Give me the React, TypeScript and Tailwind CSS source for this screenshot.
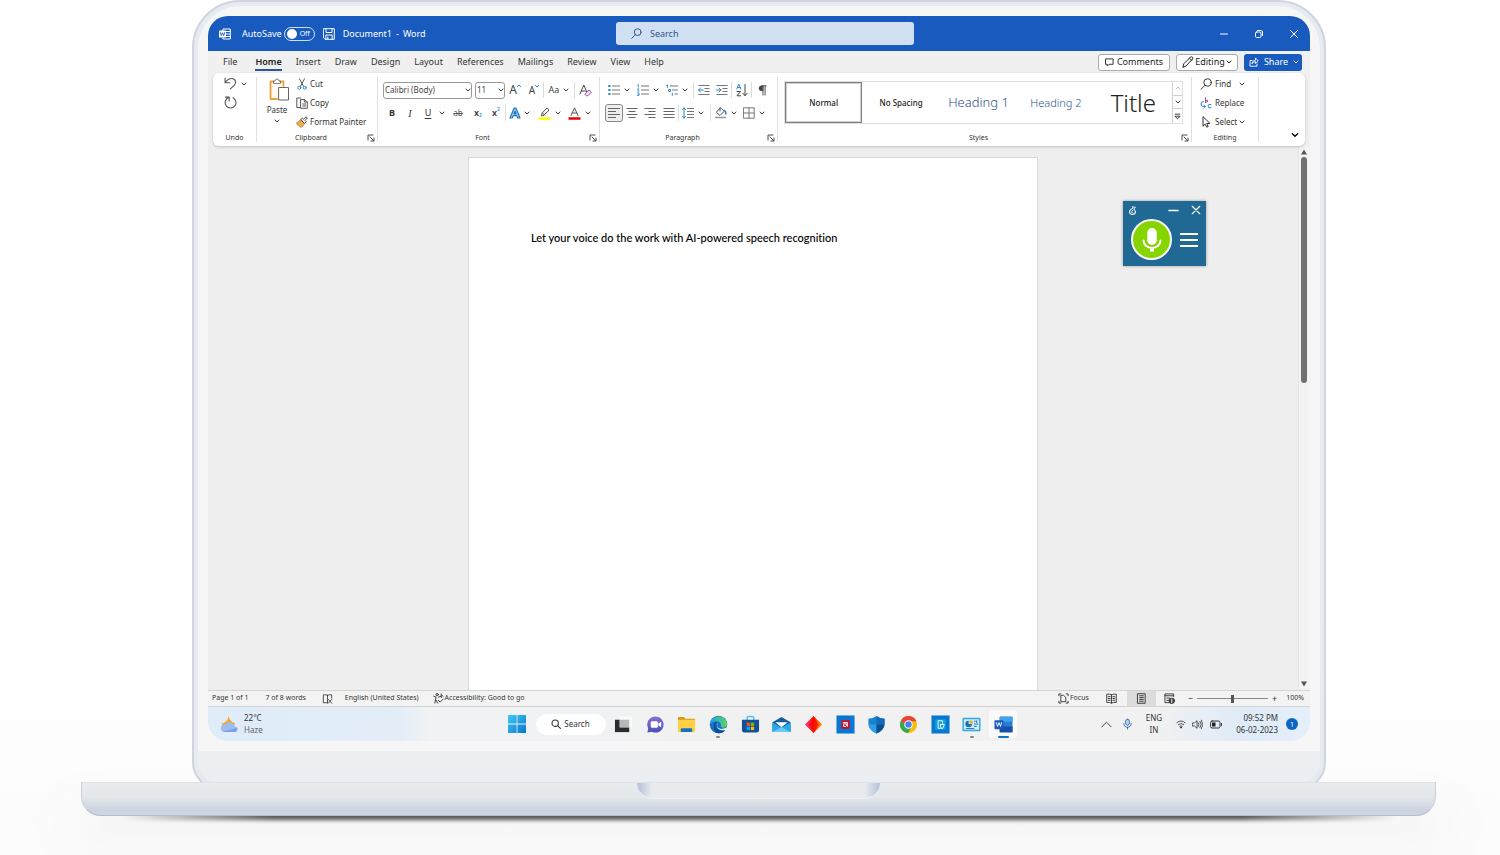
import React from "react";

type IconProps = { className?: string };
type Kids = { className?: string; children?: React.ReactNode };

const Svg = ({ className = "size-3", box = "0 0 12 12", children }: Kids & { box?: string }) => (
  <svg className={`shrink-0 ${className}`} viewBox={box} fill="none" stroke="currentColor" strokeWidth="1" strokeLinecap="round" strokeLinejoin="round" aria-hidden="true">
    {children}
  </svg>
);

const Chevron = ({ className = "size-[6px]" }: IconProps) => (
  <Svg className={className} box="0 0 6 6"><path d="M1 2l2 2 2-2" /></Svg>
);

const Btn = ({ label, className = "", children }: Kids & { label: string }) => (
  <button type="button" aria-label={label} className={`flex shrink-0 items-center justify-center ${className}`}>{children}</button>
);

const More = ({ label, className = "w-2" }: { label: string; className?: string }) => (
  <Btn label={label} className={className}><Chevron /></Btn>
);

const Sep = () => <span className="h-4 w-px shrink-0 bg-[#dcdcdc]" />;

const Launcher = ({ label }: { label: string }) => (
  <Btn label={label} className="absolute right-[2px] top-[3px]">
    <Svg className="size-2" box="0 0 8 8"><path d="M1 6V1h5M3 3l3.500 3.500M7 4v3H4" strokeWidth=".9" /></Svg>
  </Btn>
);

const Group = ({ title, className = "", launcher, children }: Kids & { title: string; launcher?: boolean }) => (
  <section aria-label={title} className={`my-1 flex flex-col border-r border-[#e0e0e0] ${className}`}>
    <div className="h-[54px] shrink-0">{children}</div>
    <div className={launcher ? "relative flex h-[14px] shrink-0 items-center justify-center pr-3 text-[7px] text-[#333]" : "relative flex h-[14px] shrink-0 items-center justify-center text-[7px] text-[#333]"}>
      <span className="leading-3">{title}</span>
      {launcher && <Launcher label={`${title} settings`} />}
    </div>
  </section>
);

/* ---------- title bar ---------- */

const WordLogo = () => (
  <Svg className="size-3">
    <path d="M4 2.500V1h7.300v10H4V9.500M6.500 3.500h4.800M6.500 6h4.800M6.500 8.500h4.800" />
    <rect x="0" y="2.500" width="7" height="7" rx=".6" fill="#fff" stroke="none" />
    <path d="M1.300 4.500l1 3 1.200-2.800 1.200 2.800 1-3" stroke="#185abd" strokeWidth=".9" />
  </Svg>
);

const TitleBar = () => (
  <header className="flex h-[35px] shrink-0 items-center bg-[#185abd] px-[11px] text-[9px] text-white">
    <div className="flex flex-1 items-center">
      <WordLogo />
      <span className="ml-[11px]">AutoSave</span>
      <button type="button" role="switch" aria-checked="false" aria-label="AutoSave" className="ml-[2px] flex h-[14px] w-[31px] items-center gap-[3px] rounded-full border border-white/80 pl-[2px] text-[7px] leading-[12px]">
        <span className="size-[10px] rounded-full bg-white" />Off
      </button>
      <Btn label="Save" className="ml-2">
        <Svg className="size-3"><path d="M.7.7h10.600v10.600H2L.7 10zM3 .7v3.800h6V.7M2.800 11.300V7h6.400v4.300M4.800 11V9" /></Svg>
      </Btn>
      <span className="ml-2 flex gap-1"><span>Document1</span><span>-</span><span>Word</span></span>
    </div>
    <label className="ml-3 flex h-[23px] w-[298px] items-center gap-2 rounded-[3px] bg-[#d1dff3] pl-[15px] text-[#244b85]">
      <Svg className="size-[11px]"><circle cx="7.300" cy="4.500" r="3.700" /><path d="M4.700 7.300L.8 11.200" /></Svg>
      <input type="search" aria-label="Search document" placeholder="Search" className="w-40 bg-transparent text-[9px] outline-none placeholder:text-[#34568a]" />
    </label>
    <div className="flex flex-1 items-center justify-end gap-[25px]">
      <Btn label="Minimize"><Svg className="size-[10px]" box="0 0 10 10"><path d="M1.500 5h7" /></Svg></Btn>
      <Btn label="Restore"><Svg className="size-[10px]" box="0 0 10 10"><rect x="1.500" y="3" width="5.500" height="5.500" rx="1.200" /><path d="M3.500 1.500H7A1.500 1.500 0 018.500 3v3.500" /></Svg></Btn>
      <Btn label="Close"><Svg className="size-[10px]" box="0 0 10 10"><path d="M1.500 1.500l7 7M8.500 1.500l-7 7" /></Svg></Btn>
    </div>
  </header>
);

/* ---------- tabs ---------- */

const tabs = ["File", "Home", "Insert", "Draw", "Design", "Layout", "References", "Mailings", "Review", "View", "Help"];

const TabBar = () => (
  <nav className="flex h-[22px] shrink-0 items-center pl-[15px] pr-2 text-[9px] text-[#333]">
    <div className="flex flex-1 gap-[14px]">
      {tabs.map((t) => (
        <a key={t} href="#" aria-current={t === "Home" ? "page" : undefined} className={t === "Home" ? "ml-1 border-y-2 border-b-[#2b579a] border-t-transparent font-semibold leading-[14px] text-[#222]" : "border-y-2 border-transparent leading-[14px]"}>{t}</a>
      ))}
    </div>
    <div className="flex items-center gap-[6px] text-[#222]">
      <button type="button" className="flex h-[17px] w-[72px] items-center justify-center gap-[3px] rounded-[3px] border border-[#aaa] bg-white">
        <Svg className="size-[9px]" box="0 0 10 10"><path d="M1 1h8v6H4.500L2.500 9V7H1z" /></Svg>Comments
      </button>
      <button type="button" className="flex h-[17px] w-[62px] items-center justify-center gap-px rounded-[3px] border border-[#aaa] bg-white">
        <Svg className="size-[12px]"><path d="M1 11l.8-3.200L8.600 1q1-.7 1.800.2t.2 1.800L4 9.900zM7.500 2.200l2.200 2.200" /></Svg>Editing<Chevron />
      </button>
      <button type="button" className="flex h-[17px] w-[58px] items-center justify-between rounded-[3px] bg-[#185abd] pl-[5px] pr-[3px] text-white">
        <Svg className="size-[10px]" box="0 0 10 10"><path d="M3 3.500H1v5.700h7V7M3 6.500q.3-3 3.500-3.300V1L9.300 4 6.500 6.500v-1.800Q4 4.600 3 6.500z" strokeWidth=".9" /></Svg>Share<Chevron />
      </button>
    </div>
  </nav>
);

/* ---------- ribbon ---------- */

const Lines = ({ d, className = "size-3" }: { d: string; className?: string }) => (
  <Svg className={className}><path d={d} stroke="#666" strokeLinecap="butt" /></Svg>
);

const UndoGroup = () => (
  <Group title="Undo" className="w-[44px]">
    <div className="flex flex-col gap-[6px] pl-[11px]">
      <div className="flex items-center gap-[3px]">
        <Btn label="Undo"><Svg className="size-[13px] text-[#555]"><path d="M1 1v4.300h4.300M1.200 5Q4 1.200 7.500 1.400q3 .4 3.200 3.200 0 1.800-1.600 3.400L5.800 11" /></Svg></Btn>
        <More label="Undo history" />
      </div>
      <Btn label="Redo" className="self-start"><Svg className="size-[13px] text-[#555]"><path d="M1.300 1h3.500v3.500M8.300 1.600A5 5 0 114.600 1.300" /></Svg></Btn>
    </div>
  </Group>
);

const ClipboardGroup = () => (
  <Group title="Clipboard" launcher className="w-[121px]">
    <div className="flex gap-[6px] pl-[7px]">
      <button type="button" className="flex w-[26px] shrink-0 flex-col items-center pt-px text-[8px] leading-[10px]">
        <Svg className="mb-[3px] ml-1 h-[24px] w-[21px]" box="0 0 21 24">
          <path d="M8 21H1.500V3.500h13V8" stroke="#e8a33d" strokeWidth="1.800" fill="#fffaf0" />
          <path d="M4.500 5V3H6q.2-2 2-2t2 2h1.500v2z" fill="#fff" stroke="#777" />
          <rect x="10" y="9.500" width="9.500" height="12.500" fill="#fff" stroke="#666" />
        </Svg>
        Paste
        <Chevron className="mt-[3px] size-[6px]" />
      </button>
      <div className="flex flex-col gap-[5px] text-[8px] leading-[14px]">
        <button type="button" className="flex items-center gap-[2px]">
          <Svg><path d="M3.500.8l4 7.500M8.500.8l-4 7.500" stroke="#555" /><circle cx="3.300" cy="9.700" r="1.500" stroke="#2b88c8" /><circle cx="8.700" cy="9.700" r="1.500" stroke="#2b88c8" /></Svg>Cut
        </button>
        <button type="button" className="flex items-center gap-[2px]">
          <Svg><path d="M4 10.500H.8V1h3.800M5 2.500h3.500L11.300 5v6.300H5zM8.300 2.700V5h2.800M6.800 7h2.800M6.800 9h2.800" stroke="#555" /></Svg>Copy
        </button>
        <button type="button" className="flex items-center gap-[2px] whitespace-nowrap">
          <Svg><path d="M.8 6.500l4.700-3 3.300 4-3.300 3.800-1.700-.8-.9-1.500-1 .2z" fill="#f0ad4e" stroke="#b9731e" strokeWidth=".7" /><path d="M5 3.300L6.300 2l1.300 1.200L10 .8l1.400 1.300L9 4.500l1.200 1.200-1.400 1.500z" fill="#fff" stroke="#444" /></Svg>Format Painter
        </button>
      </div>
    </div>
  </Group>
);

const FontGroup = () => (
  <Group title="Font" launcher className="w-[222px]">
    <div className="flex h-[26px] items-center pl-[5px]">
      <span className="relative flex items-center">
        <select aria-label="Font family" className="h-[17px] w-[89px] appearance-none rounded-[3px] border border-[#999] bg-white pl-px text-[8px] text-[#444]"><option>Calibri (Body)</option></select>
        <Chevron className="pointer-events-none absolute right-px size-[6px]" />
      </span>
      <span className="relative ml-[3px] flex items-center">
        <select aria-label="Font size" className="h-[17px] w-[30px] appearance-none rounded-[3px] border border-[#999] bg-white pl-px text-[8px] text-[#444]"><option>11</option></select>
        <Chevron className="pointer-events-none absolute right-px size-[6px]" />
      </span>
      <Btn label="Grow font" className="w-5 text-[12px] leading-none text-[#444]">A<Svg className="mb-2 size-[4px] text-[#2b88c8]" box="0 0 4 4"><path d="M0 3l2-2 2 2" /></Svg></Btn>
      <Btn label="Shrink font" className="w-[18px] text-[10px] leading-none text-[#444]">A<Svg className="mb-2 size-[4px] text-[#2b88c8]" box="0 0 4 4"><path d="M0 1l2 2 2-2" /></Svg></Btn>
      <Sep />
      <Btn label="Change case" className="w-[30px] gap-1 text-[9px] text-[#444]">Aa<Chevron /></Btn>
      <Sep />
      <Btn label="Clear formatting" className="w-5"><Svg className="size-[13px]" box="0 0 13 13"><path d="M1 10l3.800-9 3 7M2.300 7h4" stroke="#444" /><path d="M6.500 9.500L10 6l2.300 2.200-3.500 3.600H7.500L6 10.300z" stroke="#a349a4" fill="#f4e3f6" /></Svg></Btn>
    </div>
    <div className="flex h-5 items-center pl-[5px] text-[9px] text-[#333]">
      <Btn label="Bold" className="w-[18px] font-bold">B</Btn>
      <Btn label="Italic" className="w-[18px] font-['Liberation_Serif',serif] text-[10px] italic">I</Btn>
      <Btn label="Underline" className="w-[18px] underline underline-offset-2">U</Btn>
      <More label="Underline style" className="w-[10px]" />
      <Btn label="Strikethrough" className="w-[22px] text-[8px] text-[#555] line-through">ab</Btn>
      <Btn label="Subscript" className="w-[18px] font-semibold">x<span className="mt-[6px] text-[5px] text-[#2b88c8]">2</span></Btn>
      <Btn label="Superscript" className="w-[18px] font-semibold">x<span className="mb-[6px] text-[5px] text-[#2b88c8]">2</span></Btn>
      <Sep />
      <Btn label="Text effects" className="w-[18px]"><Svg className="size-3"><path d="M1 11L5 1.200h2L11 11H8.700l-.9-2.400H4.200L3.300 11zM6 4L5 6.800h2z" fill="#a6d4f5" stroke="#2474ba" strokeWidth="1.200" /></Svg></Btn>
      <More label="Text effect options" className="w-[6px]" />
      <Btn label="Highlight colour" className="ml-1 w-[20px]"><Svg className="size-[13px]" box="0 0 13 13"><path d="M.5 11.500h12" stroke="#ff0" strokeWidth="2.600" strokeLinecap="butt" /><path d="M3.500 8.500l.7-2.500L9 1l2 2-4.700 5zM4.500 6l2 2" stroke="#555" /></Svg></Btn>
      <More label="Highlight options" />
      <Btn label="Font colour" className="ml-[2px] w-[20px]"><Svg className="size-[13px]" box="0 0 13 13"><path d="M.5 11.500h12" stroke="#e00" strokeWidth="2.600" strokeLinecap="butt" /><path d="M3 8.500L6.500.8 10 8.500M4.200 6h4.600" stroke="#555" /></Svg></Btn>
      <More label="Font colour options" />
    </div>
  </Group>
);

const ListIcon = ({ kind }: { kind: "dot" | "num" | "multi" }) => (
  <Svg>
    {kind === "multi" ? (
      <><path d="M4 2h8M6 6h6M8.500 10H12" stroke="#777" strokeLinecap="butt" /><path d="M.5 1.500L1.500.8v2.700M3 5.500h1.500v2H3zM6.300 9v2.500" stroke="#2b88c8" strokeWidth=".9" /></>
    ) : (
      <><path d="M4 2h8M4 6h8M4 10h8" stroke="#777" strokeLinecap="butt" />
        {kind === "dot" ? <path d="M.3 2h2.200M.3 6h2.200M.3 10h2.200" stroke="#2b88c8" strokeWidth="2.100" strokeLinecap="butt" /> : <path d="M.6 1l.8-.4v2.600M.5 4.800h1.300L.6 7h1.500M.5 8.800h1.500v2.700H.5M.9 10.200H2" stroke="#2b88c8" strokeWidth=".8" />}</>
    )}
  </Svg>
);

const Dent = ({ d }: { d: string }) => (
  <Svg><path d="M.5 1.500h11M6.500 4.500h5M6.500 7.500h5M.5 10.500h11" stroke="#777" strokeLinecap="butt" /><path d={d} stroke="#2b88c8" /></Svg>
);

const ParagraphGroup = () => (
  <Group title="Paragraph" launcher className="w-[178px]">
    <div className="flex h-[26px] items-center pl-[5px]">
      <Btn label="Bullets" className="w-[18px]"><ListIcon kind="dot" /></Btn><More label="Bullet options" />
      <Btn label="Numbering" className="ml-[3px] w-[18px]"><ListIcon kind="num" /></Btn><More label="Numbering options" />
      <Btn label="Multilevel list" className="ml-[3px] w-[18px]"><ListIcon kind="multi" /></Btn><More label="Multilevel options" />
      <span className="w-1" /><Sep />
      <Btn label="Decrease indent" className="w-[19px]"><Dent d="M5.200 6H.7M2.500 4L.6 6l1.900 2" /></Btn>
      <Btn label="Increase indent" className="w-[18px]"><Dent d="M.5 6H5M3 4l2 2-2 2" /></Btn>
      <Sep />
      <Btn label="Sort" className="w-[19px]"><Svg className="h-[14px] w-3" box="0 0 12 14"><path d="M.8 6l2-5 2 5M1.500 4.500h2.700" stroke="#2b88c8" /><path d="M1 8.500h3.500L1 12.800h3.700M9 1.500v11M6.800 10.300L9 12.700l2.200-2.400" stroke="#444" /></Svg></Btn>
      <Sep />
      <Btn label="Show formatting marks" className="w-[20px]"><Svg className="size-[11px]"><path d="M5.500 1H10M6.500 1v10M8.800 1v10" stroke="#444" /><path d="M6 1H5a2.500 2.500 0 000 5.200h1z" fill="#444" stroke="#444" /></Svg></Btn>
    </div>
    <div className="flex h-5 items-center pl-[5px]">
      <Btn label="Align left" className="h-[18px] w-[18px] rounded-[3px] border border-[#888] bg-[#eee]"><Lines d="M0 1.500h12M0 4.500h8M0 7.500h12M0 10.500h8" /></Btn>
      <Btn label="Align center" className="w-[18px]"><Lines d="M.5 1.500h11M2.500 4.500h7M.5 7.500h11M2.500 10.500h7" /></Btn>
      <Btn label="Align right" className="w-[18px]"><Lines d="M.5 1.500h11M4.500 4.500h7M.5 7.500h11M4.500 10.500h7" /></Btn>
      <Btn label="Justify" className="w-[19px]"><Lines d="M.5 1.500h11M.5 4.500h11M.5 7.500h11M.5 10.500h11" /></Btn>
      <Sep />
      <Btn label="Line spacing" className="w-[18px]"><Svg><path d="M5 1.500h7M5 4.500h7M5 7.500h7M5 10.500h7" stroke="#777" strokeLinecap="butt" /><path d="M2 1v10M.5 2.500L2 .8l1.500 1.700M.5 9.500L2 11.200l1.500-1.700" stroke="#2b88c8" /></Svg></Btn>
      <More label="Spacing options" />
      <span className="w-[5px]" /><Sep />
      <Btn label="Shading" className="w-5"><Svg><path d="M.5 10.500h10" stroke="#999" strokeWidth="1.500" /><path d="M5 1L1.500 5.300 5 8.500l4-4zM5 1v3" stroke="#555" /><path d="M9 3.500q2 .5 1.800 3.500" stroke="#2b88c8" strokeWidth="1.600" /></Svg></Btn>
      <More label="Shading options" className="w-[6px]" />
      <Btn label="Borders" className="ml-[3px] w-[18px]"><Svg><path d="M.8.800h10.400v10.400H.8zM6 .8v10.400M.8 6h10.400" stroke="#777" /></Svg></Btn>
      <More label="Border options" />
    </div>
  </Group>
);

const styleNames = [
  { name: "Normal", cls: "border border-[#808080] text-[8px] font-medium text-[#222] shadow-[inset_0_0_0_1px_#d0d0d0]" },
  { name: "No Spacing", cls: "text-[8px] font-medium text-[#222]" },
  { name: "Heading 1", cls: "text-[13px] font-light text-[#2f5496]" },
  { name: "Heading 2", cls: "text-[11px] font-light text-[#2f5496]" },
  { name: "Title", cls: "text-[24px] font-light text-[#222]" },
];

const StylesGroup = () => (
  <Group title="Styles" launcher className="min-w-0 flex-1">
    <div className="ml-[6px] mr-2 mt-1 flex h-[43px] border border-[#e0e0e0]">
      <div className="grid flex-1 grid-cols-5">
        {styleNames.map((s) => (
          <button key={s.name} type="button" className={`flex items-center justify-center whitespace-nowrap leading-none ${s.cls}`}>{s.name}</button>
        ))}
      </div>
      <div className="grid w-[10px] grid-rows-3 divide-y divide-[#d0d0d0] border-l border-[#d0d0d0]">
        <Btn label="Previous styles"><Chevron className="size-[6px] rotate-180 text-[#bbb]" /></Btn>
        <Btn label="Next styles"><Chevron /></Btn>
        <Btn label="All styles"><Svg className="size-[7px]" box="0 0 6 6"><path d="M1 1h4M1 3l2 2 2-2z" strokeWidth=".8" /></Svg></Btn>
      </div>
    </div>
  </Group>
);

const EditingGroup = () => (
  <Group title="Editing" className="w-[67px]">
    <div className="flex flex-col items-start gap-[5px] pl-2 text-[8px] leading-[14px]">
      <button type="button" className="flex items-center gap-[3px]"><Svg><circle cx="7.500" cy="4.500" r="3.700" /><path d="M5 7.300L1 11.200" /></Svg>Find<Chevron className="ml-[5px] size-[6px]" /></button>
      <button type="button" className="flex items-center gap-[3px]"><Svg><path d="M5.500.8v4.500M5.500 3.500q2.500-1 2.500.5t-2.500 1" stroke="#a349a4" /><path d="M3.500 4.500Q1 4.500 1 7t2.500 2.500H5M3.800 8l1.500 1.500L3.800 11M11 7.500Q8 6.500 8 9t3 1.800" stroke="#2b88c8" /></Svg>Replace</button>
      <button type="button" className="flex items-center gap-[3px]"><Svg><path d="M3 1v9.200l2.200-2 1.500 3 1.500-.7-1.500-3h3z" /></Svg>Select<Chevron className="-ml-px size-[6px]" /></button>
    </div>
  </Group>
);

const Ribbon = () => (
  <div className="z-10 mx-[5px] flex h-[73px] shrink-0 overflow-hidden rounded-md bg-white text-[#333] shadow-[0_1px_3px_rgba(0,0,0,0.2)]">
    <UndoGroup /><ClipboardGroup /><FontGroup /><ParagraphGroup /><StylesGroup /><EditingGroup />
    <div className="flex w-[46px] items-end justify-end pb-[7px] pr-[6px]">
      <Btn label="Collapse ribbon"><Chevron className="size-2 text-black" /></Btn>
    </div>
  </div>
);

/* ---------- document ---------- */

const DictationBox = () => (
  <aside aria-label="Dictation" className="absolute right-[104px] top-[55px] flex h-[65px] w-[83px] flex-col bg-[#1f6994] text-white shadow-[0_0_3px_rgba(0,0,0,0.35)]">
    <div className="flex h-[18px] items-center pl-[5px] pr-[5px]">
      <Svg className="size-[9px]"><path d="M6.500.5Q7.500 2.200 5 3.800 2 5.500 2 8q.3 3 4 3.200Q9.800 11 10 8 9.900 6 8 4.500M9.500 1.500L8.500 3" strokeWidth="1.400" /><path d="M6 6Q4.800 7.200 5 8.300t1.500 1" strokeWidth="1.200" /></Svg>
      <span className="flex-1" />
      <Btn label="Minimize dictation"><Svg className="size-[11px]"><path d="M1 6h10" strokeWidth="1.400" /></Svg></Btn>
      <Btn label="Close dictation" className="ml-3"><Svg className="size-[10px]"><path d="M1.500 1.500l9 9M10.500 1.500l-9 9" strokeWidth="1.400" /></Svg></Btn>
    </div>
    <div className="flex items-center gap-2 pl-2">
      <Btn label="Microphone" className="size-[41px] rounded-full border-2 border-white bg-[#86d400]">
        <Svg className="size-[26px]" box="0 0 26 26"><rect x="8.300" y="1" width="9.400" height="17" rx="4.700" fill="#fff" stroke="none" /><path d="M4.500 13.500a8.500 7.500 0 0017 0" strokeWidth="2" /><path d="M13 21v3.500" strokeWidth="4" strokeLinecap="butt" /></Svg>
      </Btn>
      <Btn label="Menu"><Svg className="h-4 w-[18px]" box="0 0 18 16"><path d="M0 2h18M0 8h18M0 14h18" strokeWidth="2" strokeLinecap="butt" /></Svg></Btn>
    </div>
  </aside>
);

const DocumentArea = () => (
  <main className="relative flex flex-1 bg-[#eee]">
    <div className="flex flex-1 justify-center pt-[11px]">
      <article className="w-full max-w-[570px] border border-b-0 border-[#d9d9d9] bg-white px-[62px] pt-[72px]">
        <p className="whitespace-nowrap font-['Lato',sans-serif] text-[11px] font-medium leading-4 text-black [font-variant-ligatures:none]">Let your voice do the work with AI-powered speech recognition</p>
      </article>
    </div>
    <div className="flex w-3 flex-col items-center border-x border-l-[#e4e4e4] border-r-transparent bg-[#f3f3f3] py-[3px]">
      <Svg className="mb-[2px] size-[6px]" box="0 0 6 6"><path d="M0 5.500L3 .5l3 5z" fill="#555" stroke="none" /></Svg>
      <span className="h-[226px] w-[6px] rounded-full bg-[#707070]" />
      <span className="flex-1" />
      <Svg className="size-[6px]" box="0 0 6 6"><path d="M0 .5h6l-3 5z" fill="#555" stroke="none" /></Svg>
    </div>
    <DictationBox />
  </main>
);

const StatusBar = () => (
  <div className="flex h-[17px] shrink-0 items-center border-y border-[#d4d4d4] bg-[#f3f3f3] pl-1 pr-[6px] text-[7px] text-[#333]">
    <span>Page 1 of 1</span>
    <span className="ml-[17px]">7 of 8 words</span>
    <Svg className="ml-4 h-[10px] w-[11px]"><path d="M6 1.500v9M6 1.500Q4 .5 1 1v9.500h5M6 1.500Q8 .5 11 1v4M7 6.500l4 4.500M11 6.500L7 11" /></Svg>
    <span className="ml-3">English (United States)</span>
    <button type="button" className="ml-[14px] flex items-center"><Svg className="size-[11px]"><circle cx="4.500" cy="1.800" r="1.300" /><path d="M.8 3.500l2.500 1L2 11M8.500 3.500L6 4.500M3.500 8l1.500 3M9 1v4M6 8l1.800 2L11.300 6.500M9.500 2.500l1.500 1" /></Svg><span className="pl-px">Accessibility: Good to go</span></button>
    <span className="flex-1" />
    <button type="button" className="flex items-center gap-px"><Svg className="size-[11px]"><path d="M3 1H1v2M9 1h2v2M1 9v2h2M11 9v2H9M3.500 2.500H6l2.500 2.300v4.700h-5z" /></Svg>Focus</button>
    <Btn label="Read mode" className="ml-4 w-[14px]"><Svg className="size-[11px]"><path d="M6 2v9M6 2Q4 .8.800 1.300v9Q4 10 6 11q2-1 5.200-.7v-9Q8 .8 6 2M2.500 4h2M2.500 6h2M2.500 8h2M7.500 4h2M7.500 6h2M7.500 8h2" /></Svg></Btn>
    <Btn label="Print layout" className="ml-2 h-[15px] w-[29px] bg-[#dcdcdc]"><Svg className="size-[11px]"><path d="M2 .8h8v10.400H2zM4 3h4M4 5h4M4 7h4M4 9h4" /></Svg></Btn>
    <Btn label="Web layout" className="ml-2 w-3"><Svg className="size-[11px]"><path d="M6 10.500H1V1h9.500v3M1 3h9M3 5.500h3M3 8h2" /><circle cx="8.500" cy="8.500" r="3" fill="#444" /><path d="M8.500 6.500v4" stroke="#fff" /></Svg></Btn>
    <Btn label="Zoom out" className="ml-3 text-[9px]">−</Btn>
    <input type="range" aria-label="Zoom" min="0" max="100" defaultValue="50" className="mx-1 h-px w-[71px] appearance-none bg-[#888] [&::-webkit-slider-thumb]:h-2 [&::-webkit-slider-thumb]:w-[3px] [&::-webkit-slider-thumb]:appearance-none [&::-webkit-slider-thumb]:bg-[#555]" />
    <Btn label="Zoom in" className="mr-[9px] text-[9px]">+</Btn>
    <span>100%</span>
  </div>
);

/* ---------- taskbar ---------- */

const App20 = ({ children }: Kids) => <Svg className="size-[19px]" box="0 0 20 20"><g stroke="none">{children}</g></Svg>;

const apps: { name: string; state?: "open" | "active"; art: React.ReactNode }[] = [
  { name: "Task view", art: <><rect x="1" y="5" width="15" height="13" fill="#2c2c2c" /><rect x="6" y="1.500" width="13" height="11.500" fill="#fafafa" /><rect x="6" y="5" width="10" height="8" fill="#b8b8b8" /></> },
  { name: "Chat", art: <><path d="M10 1.500a8.500 8.500 0 11-4 16L1.500 18.500l.8-4.500A8.500 8.500 0 0110 1.500z" fill="url(#chatFill)" /><rect x="5" y="6.500" width="7.500" height="7" rx="1.500" fill="#fff" /><path d="M13 9l3-2v6l-3-2z" fill="#fff" /></> },
  { name: "File Explorer", art: <><path d="M1 3q0-1 1-1h5l2 2h9q1 0 1 1v3H1z" fill="#d99a15" /><rect x="1" y="5" width="18" height="13" rx="1" fill="#ffcf45" /><path d="M4 18v-3q0-1 1-1h10q1 0 1 1v3z" fill="#1573c4" /></> },
  { name: "Edge", state: "open", art: <><circle cx="10" cy="10" r="9.200" fill="#1473c8" /><path d="M.9 9.500A9.200 9.200 0 0119.200 9.500q0 3.500-4 3.800-3.200 0-2.700-2 .5-3.500-3-4.500Q4.500 5.500.9 9.500z" fill="url(#edgeTop)" /><path d="M8.500 7.500q-3 3-.5 6.500t9.500 1.500q-3.500 4.500-8 3.600T5 12.500 8.500 7.500z" fill="#0c4f95" /><path d="M9.500 8.500q-2 2.500.3 5t9.400-.5q-.5 2-1.500 2.800-5 1-7.500-1t-.7-6.300z" fill="#f1f1f1" /></> },
  { name: "Store", art: <><path d="M6.500 5V3q0-1.500 1.500-1.500h4q1.500 0 1.500 1.500v2" fill="none" stroke="#4fc3f7" strokeWidth="1.500" /><path d="M1 5h18v11q0 2.500-2.500 2.500h-13Q1 18.500 1 16z" fill="#174f94" /><rect x="6" y="8" width="3.500" height="3.500" fill="#f25022" /><rect x="10.300" y="8" width="3.500" height="3.500" fill="#7fba00" /><rect x="6" y="12.300" width="3.500" height="3.500" fill="#00a4ef" /><rect x="10.300" y="12.300" width="3.500" height="3.500" fill="#ffb900" /></> },
  { name: "Mail", art: <><path d="M.5 7.500L10 2l9.500 5.500V18H.5z" fill="#155b9e" /><path d="M3.500 7.500h13L10 13z" fill="#fff" /><path d="M.5 7.500l9.500 6 9.500-6V18H.5z" fill="#28a8ea" /><path d="M.5 18l9.500-5.500 9.500 5.500z" fill="#63cdf7" /></> },
  { name: "Sticker", art: <><path d="M10 1l9 9-9 9-9-9z" fill="url(#gemFill)" /><path d="M10 1l5 9-5 9-5-9z" fill="#f00" opacity=".65" /></> },
  { name: "AMD Software", art: <><rect x=".5" y=".5" width="19" height="19" fill="#0877d1" /><rect x="5.500" y="5.500" width="9" height="9" fill="#c8102e" /><path d="M8 8h4v4l-1.200-1.200V9.200H9.200zM8 9.800v2.200h2.200" fill="none" stroke="#fff" strokeWidth="1" /></> },
  { name: "Security", art: <><path d="M10 1q4 3 8.500 3v5q0 7-8.500 10.500Q1.500 16 1.500 9V4Q6 4 10 1z" fill="#1782d4" /><path d="M10 1q4 3 8.500 3v6H10z" fill="#166bb8" /><path d="M1.500 10H10v9.500Q2.500 16.500 1.500 10z" fill="#2c9fe8" /><path d="M10 10h8.500Q17.500 16.500 10 19.500z" fill="#0c4f91" /></> },
  { name: "Chrome", art: <><circle cx="10" cy="10" r="9" fill="#fbbc05" /><path d="M2.200 5.500A9 9 0 0118.300 6.500H10L6.500 12z" fill="#ea4335" /><path d="M2.200 5.500A9 9 0 009.500 19L13 13l-6-.5z" fill="#34a853" /><circle cx="10" cy="10" r="4.500" fill="#fff" /><circle cx="10" cy="10" r="3.400" fill="#4285f4" /></> },
  { name: "Phone setup", art: <><rect x=".5" y=".5" width="19" height="19" fill="#0877d1" /><rect x="4.500" y="4.500" width="11" height="11" fill="#15a0d4" /><path d="M12 9V6H7.500v8H10M10 10h4l-1.500 4H11z" fill="none" stroke="#e6f8ff" /></> },
  { name: "Control Panel", state: "open", art: <><rect x=".5" y="3" width="19" height="14" rx="1" fill="#35a9dc" /><rect x="2" y="4.500" width="16" height="11" fill="#c7efff" /><path d="M7 6a3.500 3.500 0 103.500 3.500H7z" fill="#1873b9" /><path d="M8 5.500A3.500 3.500 0 0111.500 9H8z" fill="#f5a524" /><path d="M13 6.500h1M15.500 6v2M13 9.500h3.500M13 12h2M4.500 14.300h8" stroke="#246b97" strokeWidth="1" /></> },
  { name: "Word", state: "active", art: <><rect x="6" y="1.500" width="13.500" height="17" rx="1" fill="#2b7cd3" /><path d="M6 2h13.500v5H6z" fill="#41a5ee" /><path d="M6 12h13.500v6H6z" fill="#174ea6" /><rect x=".5" y="5.500" width="9.500" height="9.500" rx="1" fill="#185abd" /><path d="M2.500 8l1.200 4 1.600-4 1.500 4L8 8" fill="none" stroke="#fff" strokeWidth="1" /></> },
];

const Taskbar = () => (
  <footer className="flex h-[34px] shrink-0 items-center bg-[linear-gradient(90deg,#dfecf9_0%,#e2edf8_17%,#f0f2f4_20%,#f1f1f1_50%,#f1f1f1_86%,#dfebf8_94%,#e4eff9_100%)] px-3 text-[8px] text-[#333]">
    <svg className="absolute size-0" aria-hidden="true">
      <defs>
        <linearGradient id="chatFill" x1="0" y1="0" x2="0" y2="1"><stop stopColor="#8b6fd0" /><stop offset="1" stopColor="#4a4fb8" /></linearGradient>
        <linearGradient id="edgeTop"><stop stopColor="#1b9de2" /><stop offset="1" stopColor="#5fd65b" /></linearGradient>
        <linearGradient id="gemFill"><stop stopColor="#e83e9c" /><stop offset=".5" stopColor="#ff1a00" /><stop offset="1" stopColor="#ff9d00" /></linearGradient>
        <linearGradient id="winFill" x1="0" y1="0" x2="1" y2="1"><stop stopColor="#41c8f5" /><stop offset="1" stopColor="#0877cf" /></linearGradient>
      </defs>
    </svg>
    <div className="flex flex-1 items-center gap-[5px]">
      <Svg className="size-[19px]" box="0 0 20 20"><g stroke="none"><path d="M9 1q1 6 7 7.500-2 5-7.500 4.500T1.500 9Q8 8 9 1z" fill="#f7a81b" /><path d="M5 18a4 4 0 010-8q2-3.500 6-2.500t4.500 4.500a3 3 0 010 6z" fill="#9dbcf0" /><path d="M3 17q8-1 15-3.500 0 4.500-3 4.500H5z" fill="#7d9fe6" /></g></Svg>
      <div className="leading-[12px]"><div>22°C</div><div className="text-[#666]">Haze</div></div>
    </div>
    <div className="flex items-center pl-[7px]">
      <Btn label="Start"><Svg className="size-[18px]" box="0 0 18 18"><path d="M0 0h8.600v8.600H0zM9.400 0H18v8.600H9.400zM0 9.400h8.600V18H0zM9.400 9.400H18V18H9.400z" fill="url(#winFill)" stroke="none" /></Svg></Btn>
      <button type="button" className="ml-[10px] flex h-[21px] w-[70px] items-center justify-center gap-[3px] rounded-full bg-white text-[8px]">
        <Svg className="size-[10px]"><circle cx="5" cy="5" r="3.800" strokeWidth="1.300" /><path d="M8 8l3.300 3.300" strokeWidth="1.300" /></Svg>Search
      </button>
      <div className="ml-1 flex w-[408px] justify-between">
        {apps.map((a) => (
          <Btn key={a.name} label={a.name} className={a.state === "active" ? "relative size-7 rounded-[3px] bg-[#fafafa]" : "relative size-7"}>
            <App20>{a.art}</App20>
            {a.state === "open" && <span className="absolute bottom-0 h-[2px] w-1 rounded-full bg-[#888]" />}
            {a.state === "active" && <span className="absolute bottom-0 h-[2px] w-[11px] rounded-full bg-[#1573c4]" />}
          </Btn>
        ))}
      </div>
    </div>
    <div className="flex flex-1 items-center justify-end">
      <Btn label="Hidden icons"><Svg className="size-[11px]"><path d="M1 8.500l5-5 5 5" /></Svg></Btn>
      <Btn label="Voice input" className="ml-[10px]"><Svg className="h-3 w-[11px] text-[#3a6db0]"><rect x="4" y=".8" width="4" height="6.500" rx="2" fill="#b9d6f5" /><path d="M2 5.500a4 4 0 008 0M6 9.500v2" /></Svg></Btn>
      <div className="ml-3 w-[18px] text-center leading-[12px]"><div>ENG</div><div>IN</div></div>
      <Svg className="ml-[13px] size-[10px]"><path d="M1 4.500q5-4.500 10 0M2.800 6.700q3.200-2.800 6.400 0M4.500 8.700q1.500-1.200 3 0" /><circle cx="6" cy="10.300" r=".7" fill="currentColor" /></Svg>
      <Svg className="ml-[6px] size-[11px]"><path d="M.8 4.300h2L5.500 1.800v8.400L2.800 7.700h-2zM7 4q1.500 2 0 4M8.700 2.500q2.800 3.500 0 7M10.300 1.300q3 4.700 0 9.400" strokeWidth=".9" /></Svg>
      <Svg className="ml-[7px] h-[9px] w-[12px]" box="0 0 12 9"><rect x=".6" y="1" width="9.400" height="7" rx="1.500" /><rect x="2" y="2.500" width="3.500" height="4" fill="#222" stroke="none" /><path d="M11.500 3.500v2" /></Svg>
      <div className="ml-[9px] w-[47px] whitespace-nowrap text-right leading-[12px]"><div>09:52 PM</div><div>06-02-2023</div></div>
      <span className="ml-2 flex size-3 items-center justify-center rounded-full bg-[#0a66c2] text-[7px] leading-none text-white">1</span>
    </div>
  </footer>
);

/* ---------- laptop ---------- */

export default function App() {
  return (
    <div className="flex min-h-screen min-w-[1400px] flex-col overflow-hidden bg-[linear-gradient(180deg,#ffffff_0%,#ffffff_70%,#fcfcfc_100%)] pb-[39px] pl-[81px] pr-[64px] font-['Noto_Sans','Open_Sans',sans-serif]">
      <div className="-mb-2 ml-[111px] mr-[110px] flex flex-1 flex-col rounded-b-[28px] rounded-t-[48px] border-2 border-[#cfd5de] bg-[#e6eaf1] p-1">
        <div className="flex flex-1 flex-col overflow-hidden rounded-b-[24px] rounded-t-[42px] bg-[#f6f6f7]">
          <div className="flex flex-1 flex-col px-[10px] pb-[10px] pt-[10px]">
            <div className="flex flex-1 flex-col overflow-hidden rounded-[20px] bg-[#f0f0f0]">
              <TitleBar />
              <TabBar />
              <Ribbon />
              <DocumentArea />
              <StatusBar />
              <Taskbar />
            </div>
          </div>
          <div className="h-[33px] bg-[linear-gradient(180deg,#efeef2,#ebeff3)]" />
        </div>
      </div>
      <div className="relative h-[34px]">
        <div className="absolute inset-x-10 bottom-[-4px] h-2 rounded-full bg-[linear-gradient(90deg,transparent,#555_12%,#555_88%,transparent)] blur-[2px]" />
        <div className="absolute inset-x-[-20px] bottom-[-28px] h-10 rounded-full bg-black/[0.03] blur-xl" />
        <div className="relative flex h-full justify-center rounded-b-[20px] border border-t-[#dfe2e6] border-x-[#c9ced8] border-b-[#b3bccd] bg-[linear-gradient(180deg,#e9ebee_0%,#e3e7ea_45%,#ccd3e0_85%,#cfd5e3_100%)]">
          <div className="h-4 w-[243px] rounded-b-[16px] border-b border-[#eef0f3] bg-[linear-gradient(90deg,#b3c0d8,#e8eaee_6%,#e8eaee_94%,#b3c0d8)]" />
        </div>
      </div>
    </div>
  );
}
